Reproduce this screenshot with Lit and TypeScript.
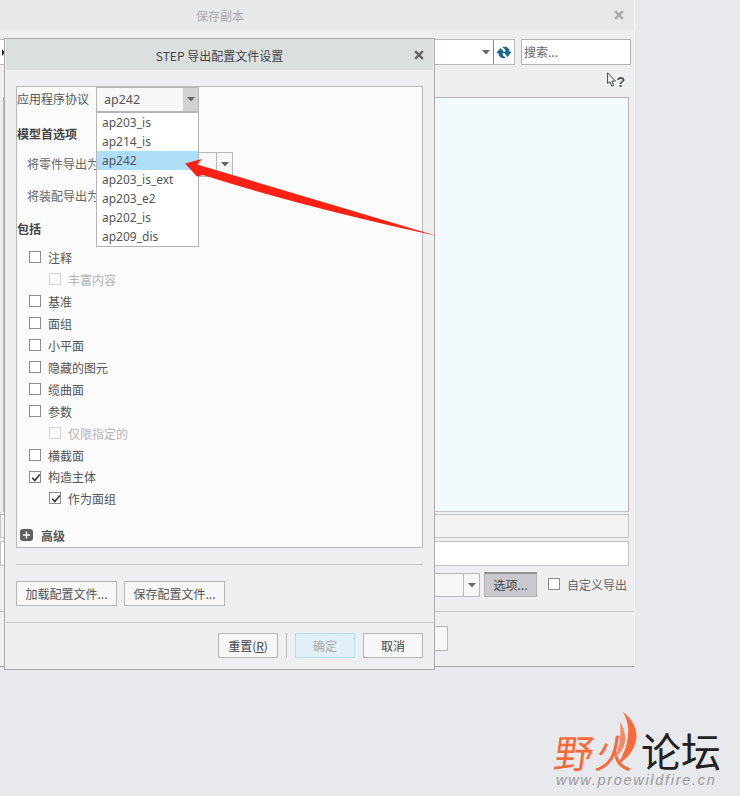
import { LitElement, html, css, svg } from "lit";
import { customElement } from "lit/decorators.js";

const caret = html`<svg class="caret" width="8" height="5" viewBox="0 0 8 5"><path d="M0 0H8L4 4.6Z" fill="#666"/></svg>`;
const closeX = (c: string) => html`<svg width="10" height="10" viewBox="0 0 10 10"><path d="M1.2 1.2L8.8 8.8M8.8 1.2L1.2 8.8" stroke="${c}" stroke-width="2.6" fill="none"/></svg>`;

type Row = { label: string; sub?: boolean; dis?: boolean; on?: boolean };
const rows: Row[] = [
  { label: "注释" },
  { label: "丰富内容", sub: true, dis: true },
  { label: "基准" },
  { label: "面组" },
  { label: "小平面" },
  { label: "隐藏的图元" },
  { label: "缆曲面" },
  { label: "参数" },
  { label: "仅限指定的", sub: true, dis: true },
  { label: "横截面" },
  { label: "构造主体", on: true },
  { label: "作为面组", sub: true, on: true },
];
const options = ["ap203_is", "ap214_is", "ap242", "ap203_is_ext", "ap203_e2", "ap202_is", "ap209_dis"];

@customElement("app-root")
export class AppRoot extends LitElement {
  static styles = css`
    :host { display: block; width: 740px; height: 796px; position: relative; overflow: hidden; background: #e8e9ed;
      font-family: "Noto Sans CJK SC", "Liberation Sans", sans-serif; font-size: 12px; color: #555; }
    * { box-sizing: border-box; }

    .back { width: 635px; height: 667px; background: #eeeff1; border-right: 1px solid #f6f6f7; border-bottom: 1px solid #a8a8a8; display: flex; flex-direction: column; }
    .back-title { height: 30px; flex: none; background: #e7e8ea; display: flex; align-items: center; padding-left: 196px; position: relative; color: #aaa; }
    .back-x { position: absolute; right: 10px; top: 10px; height: 10px; display: flex; }
    .back-tools { height: 27px; margin-top: 9px; flex: none; display: flex; padding-right: 3px; gap: 6px; }
    .path { flex: 1; height: 26px; background: #fff; border: 1px solid #bbb; border-left: none; display: flex; align-items: center; padding-left: 2px; }
    .path .drop { flex: 1; display: flex; justify-content: flex-end; padding-right: 3px; }
    .refresh { width: 21px; height: 100%; border-left: 1px solid #888; display: flex; align-items: center; justify-content: center; }
    .search { width: 110px; height: 26px; background: #fff; border: 1px solid #b5b5b5; padding-left: 2px; line-height: 24px; color: #666; }
    .help { height: 31px; flex: none; display: flex; justify-content: flex-end; align-items: flex-start; padding: 6px 9px 0 0; }
    .help-q { font: 700 14px/14px "Liberation Sans", sans-serif; color: #555; margin: 3px 0 0 0; }
    .preview { height: 415px; flex: none; margin: 0 5px 0 3px; background: #f2fafd; border: 1px solid #b5b5b5; border-bottom-color: #c4c4c4; }
    .info { height: 24px; flex: none; margin: 2px 5px 0 0; background: #f3f3f4; border: 1px solid #c4c4c4; }
    .name { height: 25px; flex: none; margin: 3px 5px 0 0; background: #fff; border: 1px solid #c4c4c4; }
    .type-row { height: 26px; flex: none; margin-top: 6px; display: flex; align-items: flex-start; justify-content: flex-end; padding-right: 7px; }
    .type { width: 50px; height: 24px; margin-top: 1px; background: #f7f7f8; border: 1px solid #b8b8b8; border-left: none; display: flex; justify-content: flex-end; margin-right: 4px; }
    .type .drop { width: 16px; border-left: 1px solid #b8b8b8; display: flex; align-items: center; justify-content: center; }
    .opts { width: 53px; height: 25px; background: #c9c8cc; border: 1px solid #b0b0b0; border-top: 2px solid #8e8e8e; text-align: center; line-height: 21px; color: #444; margin-right: 11px; }
    .check { width: 12px; height: 12px; border: 1px solid #8c8c8c; background: #fff; flex: none; position: relative; display: block; }
    .custom { display: flex; align-items: center; gap: 7px; color: #666; width: 79px; height: 24px; white-space: nowrap; }
    .back-foot { flex: 1; margin-top: 13px; border-top: 1px solid #c6c6c6; padding-top: 14px; display: flex; justify-content: flex-end; padding-right: 186px; }
    .back-btn { width: 30px; height: 25px; background: #f7f7f8; border: 1px solid #b8b8b8; }

    .dlg { position: absolute; left: 4px; top: 38px; width: 431px; height: 632px; background: #eeeff1; border: 1px solid #aaa; display: flex; flex-direction: column; }
    .dlg-title { height: 31px; flex: none; background: #dcdfe0; margin: 0 1px; padding-top: 1px; display: flex; align-items: center; justify-content: center; position: relative; color: #444; }
    .dlg-x { position: absolute; right: 9px; top: 11px; height: 10px; display: flex; }
    .panel { margin: 16px 11px 0 11px; height: 462px; flex: none; background: #fbfbfb; border: 1px solid #b9b9b9; position: relative; display: flex; flex-direction: column; }
    .proto { height: 26px; flex: none; display: flex; align-items: flex-start; }
    .proto .lbl { width: 79px; line-height: 24px; white-space: nowrap; color: #555; }
    .combo { width: 103px; height: 25px; background: #f8f8f8; border: 1px solid #b5b5b5; display: flex; align-items: center; color: #555; padding-left: 7px; font-family: "Noto Sans", "Noto Sans CJK SC", sans-serif; font-size: 12.5px; }
    .combo span { flex: 1; }
    .combo .drop { width: 15px; height: 100%; background: #d0d2d3; display: flex; align-items: center; justify-content: center; }
    .head { font-weight: 700; color: #444; line-height: 18px; flex: none; }
    .h1 { margin-top: 12px; }
    .pref { height: 26px; margin-top: 7px; flex: none; padding-left: 10px; display: flex; align-items: center; color: #666; }
    .pref + .pref { margin-top: 6px; }
    .pref-combo { margin-left: auto; margin-top: 2px; margin-right: 189px; width: 34px; height: 25px; background: #f8f8f8; border: 1px solid #b8b8b8; border-left: none; display: flex; justify-content: flex-end; }
    .pref-combo .drop { width: 16px; border-left: 1px solid #b8b8b8; display: flex; align-items: center; justify-content: center; }
    .pref-label { white-space: nowrap; }
    .h2 { margin-top: 12px; }
    .rows { margin-top: 8px; display: flex; flex-direction: column; flex: none; }
    .row { height: 22px; flex: none; display: flex; align-items: center; padding-left: 12px; gap: 7px; color: #555; white-space: nowrap; }
    .row.on { height: 21.5px; }
    .row.sub { padding-left: 32px; }
    .row.dis { color: #b5b5b5; }
    .row.dis .check { border-color: #d4d4d4; background: #fbfbfb; }
    .adv { margin-top: 17px; display: flex; align-items: center; gap: 8px; padding-left: 3px; font-weight: 700; color: #555; height: 18px; flex: none; }
    .list { position: absolute; left: 79px; top: 25px; width: 103px; height: 135px; background: #fff; border: 1px solid #b5b5b5; display: flex; flex-direction: column; z-index: 2; font-family: "Noto Sans", "Noto Sans CJK SC", sans-serif; font-size: 12px; color: #555; }
    .opt { height: 19px; line-height: 19px; padding-left: 5px; flex: none; }
    .opt.sel { background: #addffb; }
    .rule { height: 1px; flex: none; margin: 16px 11px 0; background: #c6c6c6; }
    .cfg { display: flex; gap: 7px; margin: 16px 11px 0; flex: none; }
    .btn { height: 25px; background: #f7f7f8; border: 1px solid #b5b5b5; display: flex; align-items: center; justify-content: center; color: #555; white-space: nowrap; }
    .cfg .btn { width: 101px; }
    .rule2 { height: 1px; flex: none; margin: 16px 1px 0; background: #c6c6c6; }
    .foot { display: flex; align-items: center; justify-content: flex-end; margin: 10px 11px 0 0; flex: none; }
    .foot .btn { width: 60px; color: #444; }
    .sep { width: 1px; height: 25px; background: #bbb; margin: 0 8px; }
    .btn.ok { background: #e1eff8; border-color: #b4dcf2; color: #aaa; margin-right: 8px; }
    u { text-underline-offset: 1px; }

    .arrow { position: absolute; left: 0; top: 0; z-index: 5; pointer-events: none; }
    .mark { position: absolute; left: 555px; top: 712px; width: 180px; height: 76px; }
    .mark .ye, .mark .fire { position: absolute; top: 18px; font-size: 39px; line-height: 42px; color: #f9693a; white-space: nowrap; transform: skewX(-8deg); }
    .mark .ye { left: 0; }
    .mark .fire { left: 41px; }
    .mark .huo { position: absolute; left: 0; top: 0; }
    .mark .lun { position: absolute; left: 86px; top: 17px; font-size: 40px; line-height: 42px; color: #222; white-space: nowrap; }
    .mark .url { position: absolute; left: 1px; top: 60px; font: italic 14.5px/16px "Liberation Sans", sans-serif; letter-spacing: 1.7px; color: #999; white-space: nowrap; }
  `;

  private tick() {
    return svg`<svg style="position:absolute;left:1px;top:1px" width="10" height="10" viewBox="0 0 10 10"><path d="M1.2 4.8L3.8 7.6L8.8 1.6" stroke="#333" stroke-width="1.6" fill="none"/></svg>`;
  }

  render() {
    return html`
      <div class="back">
        <div class="back-title">保存副本<span class="back-x">${closeX("#aaa")}</span></div>
        <div class="back-tools">
          <div class="path">
            <svg width="3" height="7" viewBox="0 0 3 7"><path d="M0 0L3 3.5 0 7Z" fill="#222"/></svg>
            <div class="drop">${caret}</div>
            <div class="refresh">
              <svg width="16" height="13" viewBox="0 0 16 13">
                <path d="M4.5 2L8.8 7H6.6C6.6 9 7.6 10.5 10 11.8 6 13 2.4 11 2.4 7H0.3Z" fill="#1a6a8e"/>
                <path d="M11.5 11L7.3 5.8H9.4C9.4 3.8 8.4 2.2 6 1 10 -.2 13.6 1.8 13.6 5.8H15.7Z" fill="#1a6a8e"/>
              </svg>
            </div>
          </div>
          <div class="search">搜索...</div>
        </div>
        <div class="help">
          <svg width="9" height="16" viewBox="0 0 9 16">
            <path d="M0.6 0.8V11.6L3 9.6 4.8 14.2 6.6 13.4 4.9 9H8.4Z" fill="#fafafa" stroke="#444" stroke-width="1"/>
          </svg>
          <span class="help-q">?</span>
        </div>
        <div class="preview"></div>
        <div class="info"></div>
        <div class="name"></div>
        <div class="type-row">
          <div class="type"><div class="drop">${caret}</div></div>
          <div class="opts">选项...</div>
          <div class="custom"><span class="check"></span>自定义导出</div>
        </div>
        <div class="back-foot"><div class="back-btn"></div></div>
      </div>

      <div class="dlg">
        <div class="dlg-title">STEP 导出配置文件设置<span class="dlg-x">${closeX("#666")}</span></div>
        <div class="panel">
          <div class="proto">
            <span class="lbl">应用程序协议</span>
            <div class="combo"><span>ap242</span><div class="drop">${caret}</div></div>
          </div>
          <div class="head h1">模型首选项</div>
          <div class="pref">
            <span class="pref-label">将零件导出为</span>
            <div class="pref-combo"><div class="drop">${caret}</div></div>
          </div>
          <div class="pref"><span class="pref-label">将装配导出为</span></div>
          <div class="head h2">包括</div>
          <div class="rows">
            ${rows.map(
              (r) => html`<div class="row ${r.sub ? "sub" : ""} ${r.dis ? "dis" : ""} ${r.on ? "on" : ""}">
                <span class="check">${r.on ? this.tick() : ""}</span>${r.label}
              </div>`
            )}
          </div>
          <div class="adv">
            <svg width="13" height="12" viewBox="0 0 13 12">
              <rect width="13" height="12" rx="3" fill="#606064"/>
              <path d="M6.5 2.6V9.4M3 6H10" stroke="#fff" stroke-width="1.4"/>
            </svg>
            高级
          </div>
          <div class="list">
            ${options.map((o) => html`<div class="opt ${o === "ap242" ? "sel" : ""}">${o}</div>`)}
          </div>
        </div>
        <div class="rule"></div>
        <div class="cfg">
          <div class="btn">加载配置文件...</div>
          <div class="btn">保存配置文件...</div>
        </div>
        <div class="rule2"></div>
        <div class="foot">
          <div class="btn">重置(<u>R</u>)</div>
          <div class="sep"></div>
          <div class="btn ok">确定</div>
          <div class="btn">取消</div>
        </div>
      </div>

      <svg class="arrow" width="740" height="796" viewBox="0 0 740 796">
        <path d="M185 163.5L202 159 197 164.5 437 236Q300 206 203 175L197 176.5Z" fill="#fe2114"/>
      </svg>

      <div class="mark">
        <span class="ye">野</span>
        <span class="fire">火</span>
        <svg class="huo" width="90" height="64" viewBox="0 0 90 64">
          <path d="M68 0C78 8 83 18 81 28 79 38 73 46 63 52 69 42 72 34 73 24 74 15 72 7 68 0Z" fill="#f9693a"/>
          <path d="M65 10C70 18 72 28 68 36 66 40 63 43 60 45 65 35 66 22 65 10Z" fill="#f98a60"/>
        </svg>
        <span class="lun">论坛</span>
        <span class="url">www.proewildfire.cn</span>
      </div>
    `;
  }
}
